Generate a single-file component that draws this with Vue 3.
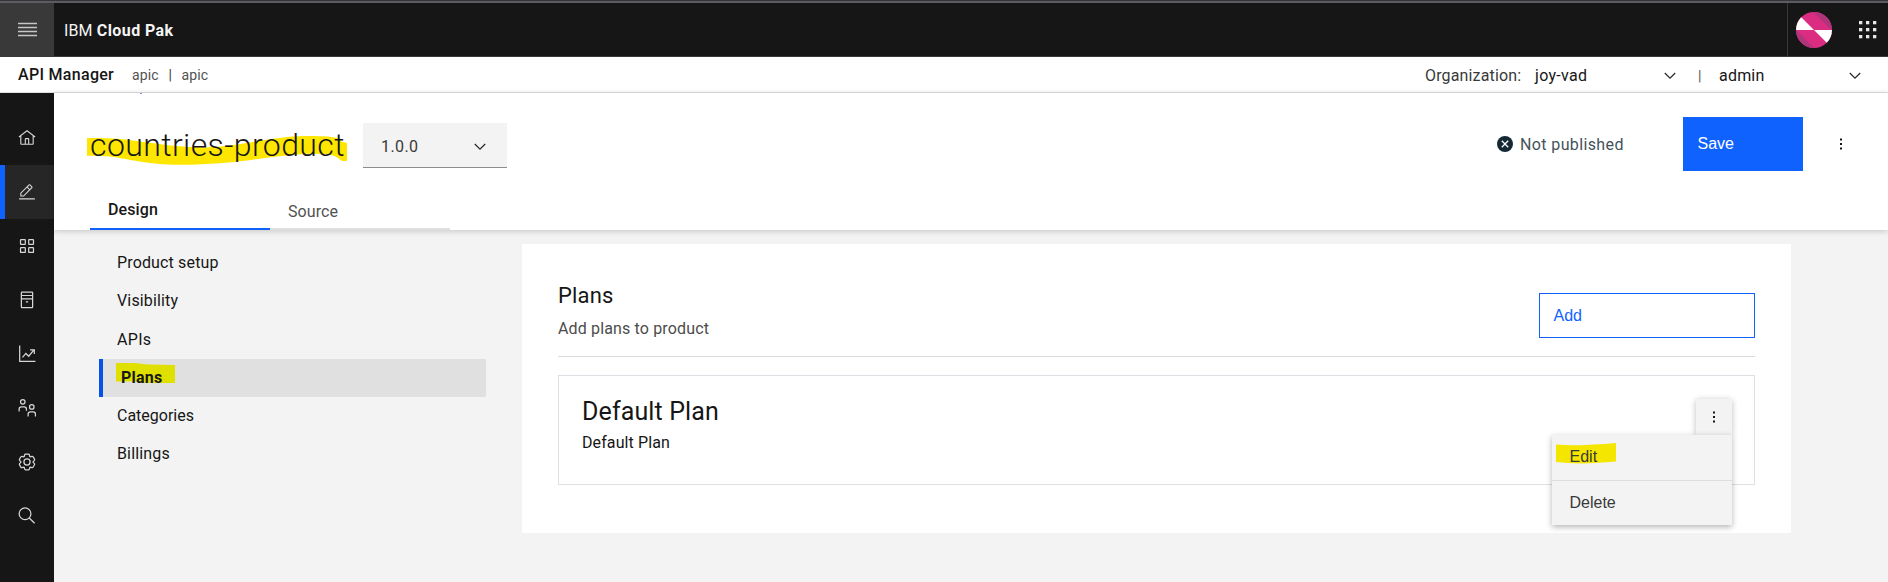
<script setup>
const navIcons = ['home', 'edit', 'apps', 'catalog', 'analytics', 'members', 'settings', 'search']
const sections = [
  { label: 'Product setup', cls: 'ls-15' },
  { label: 'Visibility', cls: 'ls-15' },
  { label: 'APIs', cls: 'ls-30' },
  { label: 'Plans', cls: '', active: true },
  { label: 'Categories', cls: '' },
  { label: 'Billings', cls: 'ls-15' },
]
</script>

<template>
  <div class="app">
    <div class="window-edge"></div>
    <header class="topbar">
      <button class="menu-btn" aria-label="Menu">
        <svg width="19" height="16" viewBox="0 0 19 16"><path d="M0 1.500h19M0 5.500h19M0 9.500h19M0 13.500h19" stroke="#c6c6c6" stroke-width="1.500" /></svg>
      </button>
      <div class="brand">IBM <b>Cloud Pak</b></div>
      <div class="top-right">
        <svg class="avatar" width="36" height="36" viewBox="0 0 36 36">
          <clipPath id="disc"><circle cx="18" cy="18" r="18" /></clipPath>
          <g clip-path="url(#disc)">
            <rect width="36" height="36" fill="#da2c80" />
            <path d="M17 0H36V18H35.500z" fill="#ae347b" />
            <path d="M0 18L18 36H0z" fill="#ae347b" />
            <path d="M0 0L18 18H0zM36 36L18 18H36z" fill="#fff" />
          </g>
        </svg>
        <svg class="waffle" width="18" height="18" viewBox="0 0 18 18">
          <template v-for="r in 3" :key="r">
            <rect v-for="c in 3" :key="c" :x="c * 7 - 7" :y="r * 7 - 7" width="3.300" height="3.300" fill="#e8e8e8" />
          </template>
        </svg>
      </div>
    </header>

    <div class="subbar">
      <span class="product">API Manager</span>
      <span class="crumb">apic</span><span class="bar-a">|</span><span class="crumb">apic</span>
      <div class="org">
        <span class="org-label">Organization:</span>
        <span class="org-name">joy-vad</span>
        <svg class="chev" width="12" height="8" viewBox="0 0 12 8"><path d="M.8 1L6 6.200 11.200 1" /></svg>
        <span class="bar-b">|</span>
        <span class="org-user">admin</span>
        <svg class="chev" width="12" height="8" viewBox="0 0 12 8"><path d="M.8 1L6 6.200 11.200 1" /></svg>
      </div>
    </div>

    <div class="body">
      <nav class="rail">
        <div v-for="name in navIcons" :key="name" class="rail-item" :class="{ current: name === 'edit' }">
          <svg width="18" height="18" viewBox="0 0 32 32">
            <path v-if="name === 'home'" class="solid" d="M16.612 2.214a1.010 1.010 0 0 0-1.243 0L1 13.419l1.243 1.572L4 13.621V26a2 2 0 0 0 2 2H26a2 2 0 0 0 2-2V13.630L29.757 15 31 13.428ZM18 26H14V18h4Zm2 0V18a2 2 0 0 0-2-2H14a2 2 0 0 0-2 2v8H6V12.061l10-7.790 10 7.800V26Z" />
            <path v-else-if="name === 'edit'" class="solid" d="M2 27H30V29.200H2zM25.400 9c.8-.8.8-2 0-2.800l-3.600-3.600c-.8-.8-2-.8-2.800 0l-15 15V24h6.400L25.400 9zM20.400 4L24 7.600l-3 3L17.400 7 20.400 4zM6 22v-3.600l10-10 3.600 3.600-10 10H6z" />
            <g v-else-if="name === 'apps'" class="line">
              <rect x="4.500" y="4.500" width="8.500" height="8.500" rx="1" /><rect x="19" y="4.500" width="8.500" height="8.500" rx="1" />
              <rect x="4.500" y="19" width="8.500" height="8.500" rx="1" /><rect x="19" y="19" width="8.500" height="8.500" rx="1" />
            </g>
            <g v-else-if="name === 'catalog'" class="line">
              <rect x="6" y="2" width="20" height="27.500" rx="1" /><path d="M6 8H26M6 14H26M14 19.500h4" />
            </g>
            <g v-else-if="name === 'analytics'" class="line">
              <path d="M3 1V29H31M8 22l6-7 5 5L28 9M21.500 8.500H29v7.500" />
            </g>
            <g v-else-if="name === 'members'" class="line">
              <circle cx="8.500" cy="5" r="4" /><path d="M2 22V18a4 4 0 0 1 4-4h5a4 4 0 0 1 4 4v3" />
              <circle cx="24.500" cy="14" r="4" /><path d="M18 31V27a4 4 0 0 1 4-4h5a4 4 0 0 1 4 4v4" />
            </g>
            <g v-else-if="name === 'settings'" class="line">
              <path d="M27 16.760c0-.25 0-.5 0-.76s0-.51 0-.77l1.920-1.680A2 2 0 0 0 29.300 11L26.940 7a2 2 0 0 0-1.730-1 2 2 0 0 0-.64.1l-2.430.82a11.350 11.350 0 0 0-1.310-.75l-.51-2.520a2 2 0 0 0-2-1.610H13.640a2 2 0 0 0-2 1.610l-.51 2.520a11.480 11.480 0 0 0-1.320.75L7.430 6.060A2 2 0 0 0 6.790 6 2 2 0 0 0 5.060 7L2.700 11a2 2 0 0 0 .41 2.510L5 15.240c0 .25 0 .5 0 .76s0 .51 0 .77L3.110 18.450A2 2 0 0 0 2.700 21L5.060 25a2 2 0 0 0 1.730 1 2 2 0 0 0 .64-.1l2.430-.82a11.350 11.350 0 0 0 1.310.75l.51 2.520a2 2 0 0 0 2 1.610h4.720a2 2 0 0 0 2-1.610l.51-2.520a11.480 11.480 0 0 0 1.320-.75l2.420.82a2 2 0 0 0 .64.1 2 2 0 0 0 1.730-1L29.300 21a2 2 0 0 0-.41-2.510Z" />
              <circle cx="16" cy="16" r="5.500" />
            </g>
            <g v-else class="line"><circle cx="12.500" cy="12" r="10.500" /><path d="M20 19.500L29.500 29" /></g>
          </svg>
        </div>
      </nav>

      <main class="main">
        <section class="page-head">
          <div class="head-row">
            <div class="title-wrap">
              <svg class="marker" width="262" height="32" viewBox="87 135 262 32">
                <path fill="#ffe600" d="M87 138C105 137.500 122 138.500 137 141C160 144 182 147.500 205 147.500C240 146.500 270 136.500 305 136C320 135.800 333 136.500 340 138.500L341 141.500L347 143V161H342C338 158 336 155.500 326 154.300C305 152.500 285 155.500 262 158.500C235 162 212 164.800 180 164.800C145 164.500 130 159 110 156.500C102 155.700 95 155.500 87 155.700Z" />
              </svg>
              <h1>countries-product</h1>
            </div>
            <div class="version">
              <span>1.0.0</span>
              <svg class="chev" width="12" height="8" viewBox="0 0 12 8"><path d="M.8 1L6 6.200 11.200 1" /></svg>
            </div>
            <div class="status">
              <svg width="16" height="16" viewBox="0 0 16 16"><circle cx="8" cy="8" r="8" fill="#152935" /><path d="M4.800 4.800l6.400 6.400M11.200 4.800L4.800 11.200" stroke="#fff" stroke-width="1.300" /></svg>
              <span>Not published</span>
            </div>
            <button class="save">Save</button>
            <svg class="kebab" width="4" height="14" viewBox="0 0 4 14"><path d="M1 1.500h2v2H1zM1 6h2v2H1zM1 10.500h2v2H1z" /></svg>
          </div>
          <div class="tabs">
            <div class="tab selected">Design</div>
            <div class="tab">Source</div>
          </div>
        </section>

        <section class="content">
          <ul class="sections">
            <li v-for="s in sections" :key="s.label" :class="[s.cls, { active: s.active }]">
              <svg v-if="s.active" class="marker" width="59" height="20" viewBox="0 0 59 20"><path fill="#e0e000" d="M0 0H18L32 1.500L59 2V20H33L18 18.500H0Z" /></svg>
              <span>{{ s.label }}</span>
            </li>
          </ul>

          <div class="panel">
            <div class="panel-head">
              <div>
                <h2>Plans</h2>
                <p>Add plans to product</p>
              </div>
              <button class="add">Add</button>
            </div>
            <div class="card">
              <div>
                <h3>Default Plan</h3>
                <p>Default Plan</p>
              </div>
              <div class="overflow">
                <div class="trigger">
                  <svg class="kebab" width="4" height="14" viewBox="0 0 4 14"><path d="M1 1.500h2v2H1zM1 6h2v2H1zM1 10.500h2v2H1z" /></svg>
                </div>
                <div class="menu">
                  <div class="option">
                    <svg class="marker" width="60" height="21" viewBox="0 0 60 21"><path fill="#f5e600" d="M0 1.500C20 2.800 35 2.200 60 0V18.500C42 20 28 21 12 20L0 19Z" /></svg>
                    <span>Edit</span>
                  </div>
                  <div class="option"><span>Delete</span></div>
                </div>
              </div>
            </div>
          </div>
        </section>
      </main>
    </div>
  </div>
</template>

<style>
body { margin: 0; overflow: hidden; }
</style>

<style scoped>
.app { width: 1888px; height: 582px; display: flex; flex-direction: column; background: #f3f3f3; color: #161616; font: 400 16px/20px Roboto, "Liberation Sans", sans-serif; overflow: hidden; }
.app * { box-sizing: border-box; }
h1, h2, h3, p, ul { margin: 0; padding: 0; font-weight: 400; }
button { border: 0; padding: 0; font: inherit; text-align: left; }
svg { display: block; flex: none; }
.ls-15 { letter-spacing: .15px; }
.ls-30 { letter-spacing: .3px; }

.window-edge { height: 3px; flex: none; background: #5d5c62; border-top: 1px solid #36343b; }
.topbar { height: 54px; flex: none; display: flex; align-items: center; background: #161616; border-bottom: 1px solid #393939; color: #f4f4f4; }
.menu-btn { width: 54px; height: 54px; background: #393939; display: flex; align-items: center; justify-content: center; }
.brand { margin-left: 10px; padding-top: 2px; letter-spacing: .15px; }
.brand b { font-weight: 700; letter-spacing: .4px; }
.top-right { margin-left: auto; width: 101px; height: 53px; border-left: 1px solid #393939; display: flex; align-items: center; padding-left: 8px; }
.waffle { margin-left: 27px; }

.subbar { height: 36px; flex: none; display: flex; align-items: center; background: #fff; border-bottom: 1px solid #e0e0e0; padding-left: 18px; }
.product { width: 114px; font-weight: 500; letter-spacing: .3px; }
.crumb { font-size: 14px; color: #525252; padding-top: 1px; letter-spacing: .1px; }
.bar-a { font-size: 14px; width: 23px; text-align: center; color: #393939; }
.org { margin-left: auto; width: 463px; display: flex; align-items: center; padding-top: 2px; color: #161616; }
.org-label { width: 110px; color: #393939; letter-spacing: .15px; }
.org-name { width: 129px; letter-spacing: .3px; }
.bar-b { width: 43px; padding-left: 22px; font-size: 14px; color: #525252; }
.org-user { width: 130px; letter-spacing: .2px; }
.chev path { fill: none; stroke: #2b2b2b; stroke-width: 1.3; }

.body { flex: 1; display: flex; min-height: 0; }
.rail { width: 54px; flex: none; background: #161616; padding-top: 18px; }
.rail-item { height: 54px; display: flex; align-items: center; justify-content: center; }
.rail-item.current { background: #262626; border-left: 5px solid #0f62fe; padding-right: 5px; }
.solid { fill: #d6d6d6; }
.line { fill: none; stroke: #d6d6d6; stroke-width: 2.2; }
.rail svg { overflow: visible; }

.main { flex: 1; min-width: 0; display: flex; flex-direction: column; }
.page-head { position: relative; z-index: 1; height: 137px; background: #fff; box-shadow: 0 1px 6px rgba(0, 0, 0, .2); padding: 24px 0 0 36px; }
.page-head::before { content: ""; position: absolute; left: 86px; top: 0; width: 2px; height: 1px; background: #7f8fd0; }
.head-row { height: 54px; display: flex; align-items: center; }
.title-wrap { position: relative; width: 273px; }
.title-wrap .marker { left: -3px; top: 12px; }
.marker { position: absolute; }
h1 { position: relative; font-size: 32px; line-height: 40px; font-weight: 300; padding-top: 2px; letter-spacing: .4px; white-space: nowrap; }
.version { width: 144px; height: 45px; margin-top: 3px; display: flex; align-items: center; justify-content: space-between; padding: 3px 21px 0 18px; background: #f3f3f3; border-bottom: 1px solid #8d8d8d; color: #393939; letter-spacing: .4px; }
.status { margin-left: auto; width: 186px; display: flex; align-items: center; gap: 7px; color: #44525b; letter-spacing: .38px; }
.status span { padding-top: 1px; }
.save { width: 120px; height: 54px; padding: 0 0 1px 14.500px; background: #0f62fe; color: #fff; font-family: "Liberation Sans", Arial, sans-serif; }
.page-head .kebab { margin: 0 45px 0 36px; }
.kebab path { fill: #161616; }
.tabs { display: flex; margin-top: 22px; }
.tab { width: 180px; height: 37px; padding: 9px 0 0 18px; border-bottom: 2px solid #e0e0e0; color: #525252; letter-spacing: .1px; }
.tab.selected { padding-top: 7px; border-color: #0f62fe; color: #161616; font-weight: 500; }

.content { flex: 1; display: flex; padding: 14px 97px 0 45px; }
.sections { width: 387px; list-style: none; padding-top: .3px; }
.sections li { position: relative; height: 38.15px; padding: 9px 0 0 18px; }
.sections li.active { background: #e0e0e0; border-left: 4px solid #0353e9; font-weight: 700; letter-spacing: .2px; }
.sections .marker { left: 13px; top: 4px; }
.sections span { position: relative; }
.panel { margin-left: 36px; width: 1269px; height: 289px; background: #fff; padding: 36px 36px 0; }
.panel-head { height: 77px; display: flex; justify-content: space-between; border-bottom: 1px solid #dcdcdc; }
h2 { font-size: 22px; line-height: 30px; padding-top: 1px; letter-spacing: .15px; }
.panel-head p { margin-top: 8px; color: #4c4c4c; letter-spacing: .15px; }
.add { width: 216px; height: 45px; margin-top: 13px; padding: 1px 0 0 13.500px; background: #fff; border: 1px solid #0f62fe; color: #0f62fe; font-family: "Liberation Sans", Arial, sans-serif; }
.card { height: 110px; margin-top: 18px; border: 1px solid #dde1e6; padding: 19px 22px 0 23px; display: flex; justify-content: space-between; }
h3 { font-size: 25px; line-height: 34px; letter-spacing: .12px; }
.card p { margin-top: 4px; letter-spacing: .1px; }
.overflow { position: relative; width: 36px; height: 36px; margin-top: 4px; }
.trigger { height: 36px; display: flex; align-items: center; justify-content: center; background: #f3f3f3; border-radius: 2px 2px 0 0; box-shadow: 0 1px 6px rgba(0, 0, 0, .26); }
.menu { position: absolute; top: 36px; right: 0; width: 180px; background: #f3f3f3; box-shadow: 0 2px 6px rgba(0, 0, 0, .3); color: #393939; font-family: "Liberation Sans", Arial, sans-serif; }
.option { position: relative; height: 45px; padding: 12px 0 0 17.500px; }
.option + .option { border-top: 1px solid #dedede; }
.option .marker { left: 4px; top: 8px; }
.option span { position: relative; }
</style>
